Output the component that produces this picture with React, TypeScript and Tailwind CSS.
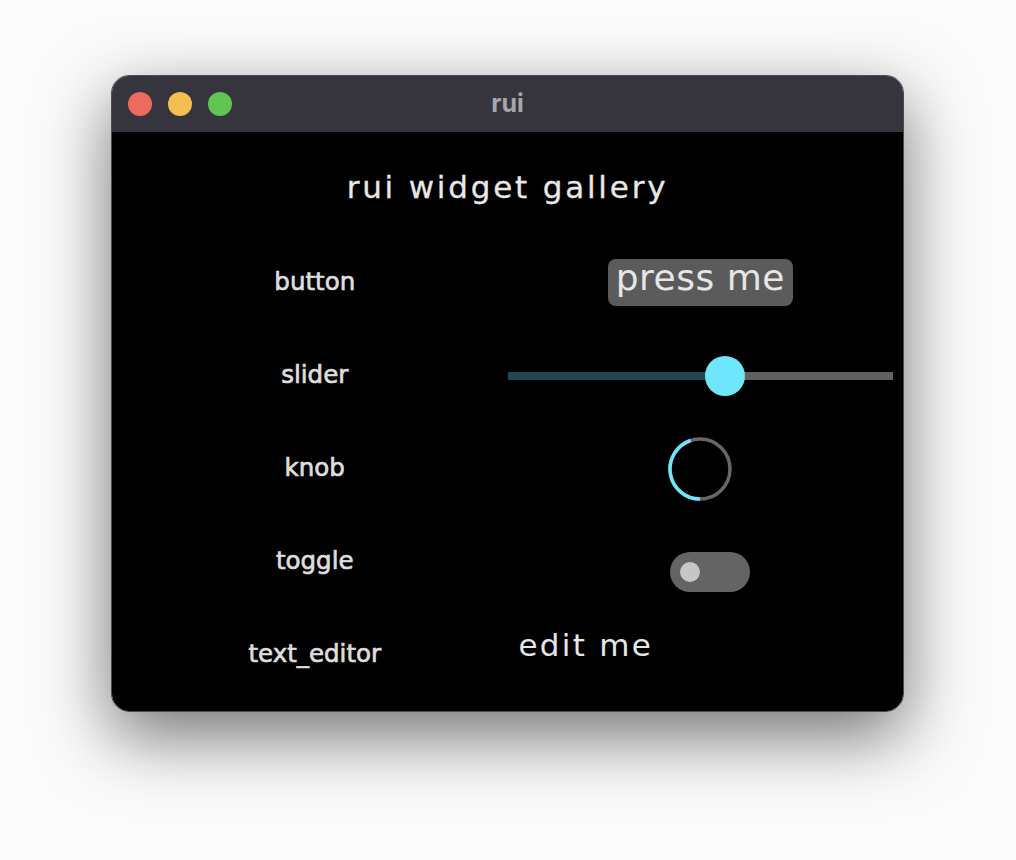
import React from "react";

const font = { fontFamily: "'DejaVu Sans', Inter, sans-serif" };

function Knob() {
  return (
    <svg width="64" height="64" viewBox="0 0 64 64">
      <circle cx="32" cy="32" r="30" fill="none" stroke="#676767" strokeWidth="3.5" />
      <path d="M32 62 A30 30 0 0 1 22.73 3.47" fill="none" stroke="#6ee6fb" strokeWidth="3.5" />
    </svg>
  );
}

function Slider({ value }: { value: number }) {
  return (
    <div className="relative w-full h-[40px] flex items-center">
      <div className="w-full h-[8px] flex">
        <div className="h-full bg-[#214852]" style={{ width: `${value * 100}%` }} />
        <div className="h-full flex-1 bg-[#5f5f5f]" />
      </div>
      <div
        className="absolute top-0 w-[40px] h-[40px] -ml-[20px] rounded-full bg-[#6ee6fb]"
        style={{ left: `${value * 100}%` }}
      />
    </div>
  );
}

export default function App() {
  const rows: [string, React.ReactNode][] = [
    [
      "button",
      <div className="flex justify-center">
        <div className="w-[185px] h-[47px] rounded-[8px] bg-[#5b5b5b] text-[#e6e6e6] text-[36px] tracking-[0.5px] leading-none pl-[8px] pt-[1px] whitespace-nowrap">
          press me
        </div>
      </div>,
    ],
    ["slider", <Slider value={0.565} />],
    [
      "knob",
      <div className="flex justify-center">
        <Knob />
      </div>,
    ],
    [
      "toggle",
      <div className="flex justify-center pl-[20px] pt-[20px]">
        <div className="w-[80px] h-[40px] rounded-full bg-[#646464] flex items-center pl-[10px]">
          <div className="w-[20px] h-[20px] rounded-full bg-[#c6c6c6]" />
        </div>
      </div>,
    ],
    [
      "text_editor",
      <div className="pl-[11px] pb-[18px] text-[31px] tracking-[2.3px] text-[#e6e6e6] leading-none">edit me</div>,
    ],
  ];

  return (
    <div className="w-[1016px] h-[860px] bg-[#fbfbfb] pt-[75px] pl-[111px]" style={font}>
      <div className="w-[793px] h-[637px] rounded-[18px] overflow-hidden border border-[#4c4c4c] flex flex-col shadow-[0_24px_70px_rgba(0,0,0,0.55)]">
        {/* TITLE BAR */}
        <div
          className="h-[56px] bg-[#36343d] grid grid-cols-[1fr_auto_1fr] items-center"
          style={{ fontFamily: "Inter, sans-serif" }}
        >
          <div className="flex gap-[16px] pl-[16px]">
            <div className="w-[24px] h-[24px] rounded-full bg-[#ed6a5e]" />
            <div className="w-[24px] h-[24px] rounded-full bg-[#f5bf4f]" />
            <div className="w-[24px] h-[24px] rounded-full bg-[#61c554]" />
          </div>
          <div className="text-[25px] font-bold text-[#a7a5ad] leading-none pb-[2px]">rui</div>
          <div />
        </div>

        {/* CONTENT */}
        <div className="flex-1 bg-black flex flex-col px-[10px] pt-[6px]">
          <div className="h-[98px] flex items-center justify-center text-[31px] tracking-[2.8px] text-[#e8e8e8] [-webkit-text-stroke:0.3px_#e8e8e8]">
            rui widget gallery
          </div>
          {rows.map(([label, widget]) => (
            <div key={label} className="h-[93px] grid grid-cols-2 items-center">
              <div className="text-center text-[24.5px] text-[#dedede] [-webkit-text-stroke:0.7px_#dedede]">{label}</div>
              <div>{widget}</div>
            </div>
          ))}
        </div>
      </div>
    </div>
  );
}
